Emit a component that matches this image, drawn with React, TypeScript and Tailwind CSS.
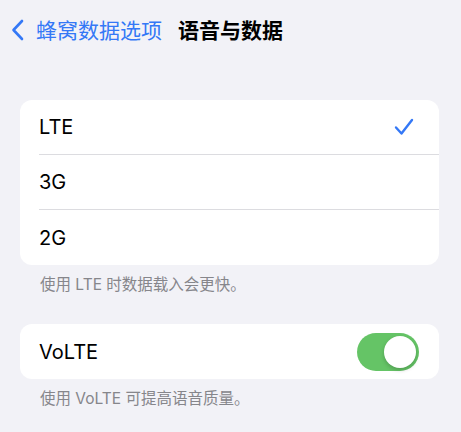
import React, { useState } from "react";

const FONT = {
  fontFamily: '"Inter", "Noto Sans CJK SC", sans-serif',
};

const options = ["LTE", "3G", "2G"];

const ChevronLeft = () => (
  <svg width="13" height="22" viewBox="0 0 13 22" fill="none">
    <path
      d="M11 2 L2.5 11 L11 20"
      stroke="#3478f6"
      strokeWidth="2.6"
      strokeLinecap="round"
      strokeLinejoin="round"
    />
  </svg>
);

const Check = () => (
  <svg width="20" height="18" viewBox="0 0 20 18" fill="none">
    <path
      d="M2 9.5 L7.5 15.5 L18 2"
      stroke="#3478f6"
      strokeWidth="2.4"
      strokeLinecap="round"
      strokeLinejoin="round"
    />
  </svg>
);

export default function App() {
  const [selected, setSelected] = useState("LTE");
  const [volte, setVolte] = useState(true);

  return (
    <div
      className="w-[461px] h-[432px] bg-[#f2f2f7] overflow-hidden text-black"
      style={FONT}
    >
      {/* nav bar */}
      <div className="h-[60px] flex items-center pl-[11px]">
        <button className="flex items-center gap-[12px] text-[#3478f6]">
          <ChevronLeft />
          <span className="text-[21px] leading-none">蜂窝数据选项</span>
        </button>
        <span className="ml-[16px] text-[21px] font-semibold leading-none">
          语音与数据
        </span>
      </div>

      {/* network options */}
      <div className="mt-[40px] ml-[20px] w-[419px] bg-white rounded-[12px]">
        {options.map((opt, i) => (
          <button
            key={opt}
            onClick={() => setSelected(opt)}
            className="w-full flex items-stretch pl-[19px] h-[55px] text-left"
          >
            <div
              className={`flex-1 flex items-center justify-between pr-[25px] ${
                i < options.length - 1 ? "border-b border-[#dcdce0]" : ""
              }`}
            >
              <span className="text-[20px]">{opt}</span>
              {selected === opt && <Check />}
            </div>
          </button>
        ))}
      </div>
      <p className="px-[40px] pt-[8px] text-[15.5px] leading-[24px] text-[#86868b]">
        使用 LTE 时数据载入会更快。
      </p>

      {/* volte */}
      <div className="mt-[27px] ml-[20px] w-[419px] bg-white rounded-[12px] h-[55px] flex items-center justify-between pl-[19px] pr-[20px]">
        <span className="text-[20px]">VoLTE</span>
        <button
          onClick={() => setVolte(!volte)}
          className={`w-[62px] h-[38px] rounded-full p-[3px] flex ${
            volte ? "bg-[#65c466] justify-end" : "bg-[#e9e9ea] justify-start"
          }`}
        >
          <span className="w-[32px] h-[32px] rounded-full bg-white shadow-[0_2px_4px_rgba(0,0,0,0.2)]" />
        </button>
      </div>
      <p className="px-[40px] pt-[8px] text-[15.5px] leading-[24px] text-[#86868b]">
        使用 VoLTE 可提高语音质量。
      </p>
    </div>
  );
}
